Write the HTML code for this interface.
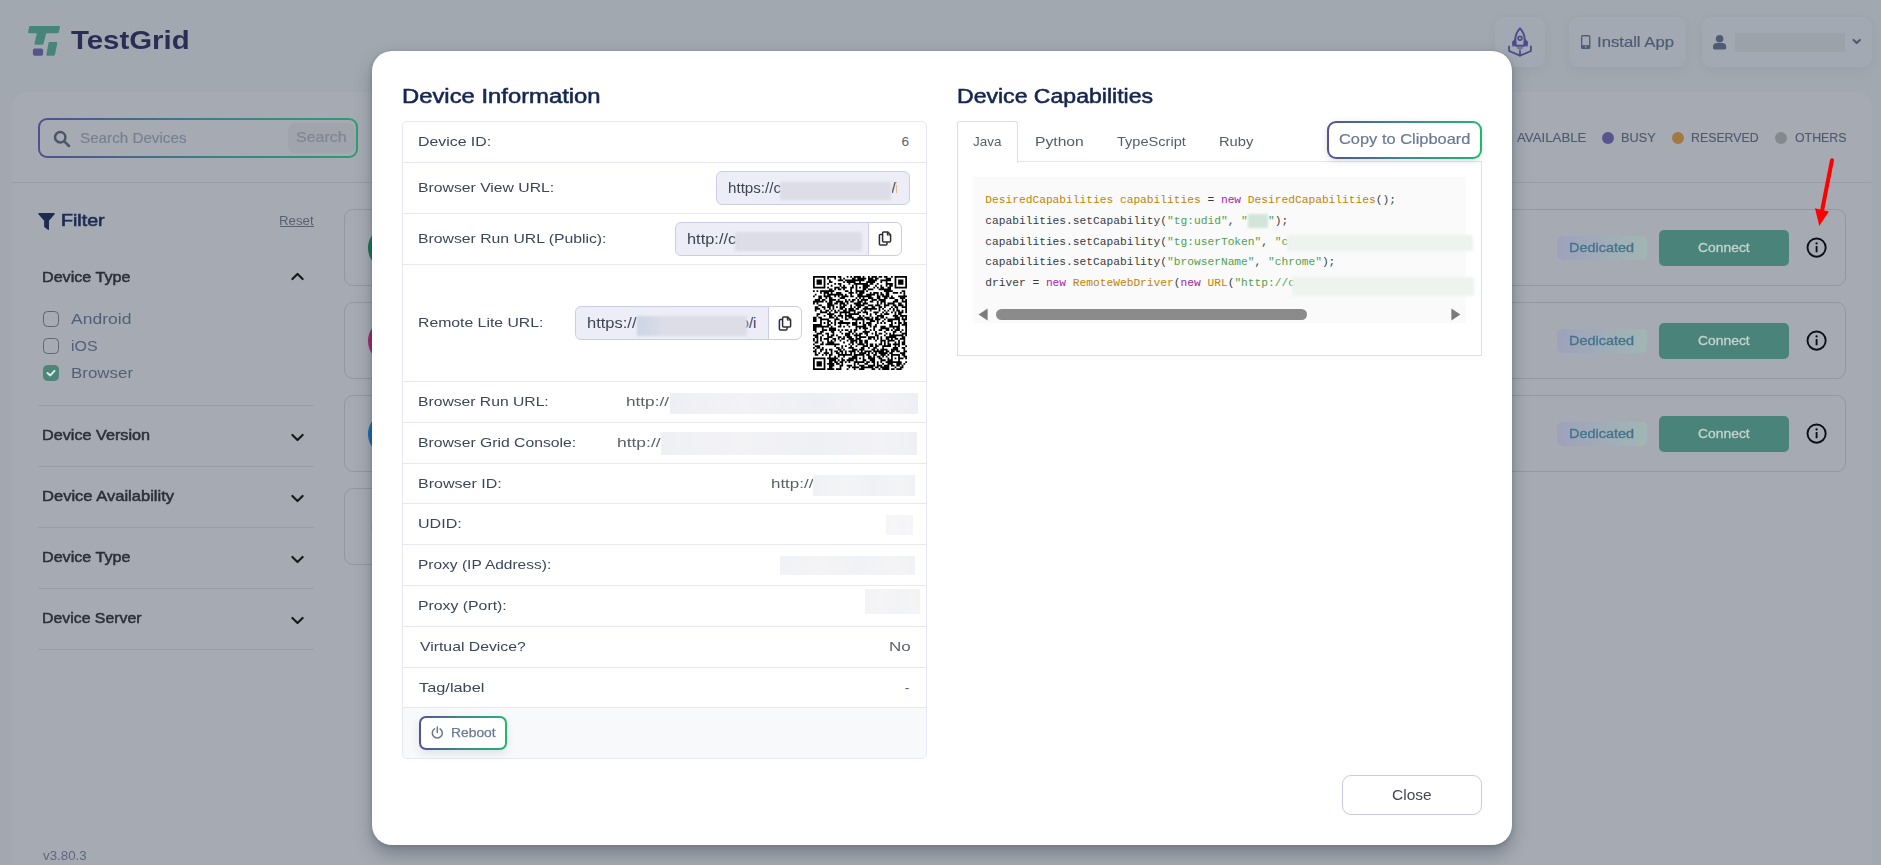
<!DOCTYPE html>
<html lang="en"><head><meta charset="utf-8"><title>TestGrid - Device Information</title>
<style>
html,body{margin:0;padding:0;}
body{width:1881px;height:865px;overflow:hidden;position:relative;background:#a1a8b0;font-family:"Liberation Sans",sans-serif;}
.t{position:absolute;line-height:1;white-space:pre;display:block;transform-origin:0 0;}
svg{position:absolute;display:block;overflow:visible;}
#panel{position:absolute;left:12px;top:92px;width:1860px;height:800px;border-radius:15px 15px 0 0;background:#a6abb3;}
.hbtn{position:absolute;top:17px;height:50px;border-radius:9px;background:#a3a9b2;box-shadow:0 3px 10px rgba(60,70,90,.07);}
.hr{position:absolute;height:1px;background:#979da6;}
.card{position:absolute;left:344px;width:1500px;height:75px;border:1px solid #92989f;border-radius:9px;}
.badge{position:absolute;left:1557px;width:90px;height:24px;border-radius:5px;background:linear-gradient(90deg,#9ea2bc,#a1b6b4);}
.conn{position:absolute;left:1659px;width:130px;height:36px;border-radius:5px;background:#4a8379;}
.cb{position:absolute;left:43px;width:14px;height:14px;border:1px solid #5f6670;border-radius:4.5px;}
#modal{position:absolute;left:372px;top:51px;width:1140px;height:794px;border-radius:20px;background:#fff;box-shadow:0 9px 17px rgba(35,52,64,.36),0 1px 4px rgba(35,52,64,.2);}
.rowl{position:absolute;left:403px;width:523px;height:1px;background:#e7e8f3;}
.inp{position:absolute;box-sizing:border-box;background:#ecedf6;border:1px solid #cdcce6;}
.blur{position:absolute;filter:blur(1.2px);}
.m{font-family:"Liberation Mono",monospace;font-size:11.22px;}

</style></head>
<body>
<svg style="left:28px;top:25px" width="33" height="31" viewBox="28 25 33 31">
<path d="M30.2 26 H59.2 Q60.3 26 60 27.2 L58.7 32.2 Q58.4 33.2 57.3 33.2 H46.2 L43.6 43.6 Q43.3 44.7 42.2 44.7 H35.4 Q34.2 44.7 34.5 43.5 L36.9 33.2 H29.2 Q27.9 33.2 28.2 32 L29.1 27 Q29.3 26 30.2 26 Z" fill="#47857a"/>
<path d="M49.6 42 H56.2 Q57.6 42 57.3 43.3 L55 54.6 Q54.8 55.7 53.6 55.7 H47.4 Q46.1 55.7 46.4 54.4 L48.5 43 Q48.7 42 49.6 42 Z" fill="#47857a"/>
<rect x="32.9" y="48.6" width="10.2" height="7.2" rx="1.8" fill="#555687"/>
</svg>
<span class="t" style="top:27.30px;font-size:26px;color:#2b2d55;left:70.87px;transform:scaleX(1.1304);font-weight:700;">TestGrid</span>
<div class="hbtn" style="left:1495px;width:50px"></div>
<div class="hbtn" style="left:1569px;width:117px"></div>
<div class="hbtn" style="left:1702px;width:170px"></div>
<svg style="left:1506.7px;top:27px" width="26" height="30" viewBox="0 0 26 30" fill="none" stroke="#4b4c8c" stroke-width="2" stroke-linecap="round" stroke-linejoin="round">
<path d="M13 1.4 C9.4 5 7.9 9.6 8.3 15 L8.7 18.8 H17.3 L17.7 15 C18.1 9.6 16.6 5 13 1.4 Z"/>
<circle cx="13" cy="11.2" r="1.9" stroke-width="1.7"/>
<path d="M8.1 12.2 L5.5 14.9 L5.9 19.3 L8.7 17.5 Z" fill="#4b4c8c" stroke-width="1"/>
<path d="M17.9 12.2 L20.5 14.9 L20.1 19.3 L17.3 17.5 Z" fill="#4b4c8c" stroke-width="1"/>
<path d="M2.1 19.4 V24 L13 28.7 L23.9 24 V19.4" stroke-width="1.8"/>
<path d="M13 24 V28.4" stroke-width="1.8"/>
<path d="M11.1 20.4 V21.4 M13 20.6 V22.4 M14.9 20.4 V21.4" stroke-width="1.1"/>
</svg>
<svg style="left:1580.8px;top:35px" width="9.4" height="13.9" viewBox="0 0 9.4 13.9">
<rect x="0" y="0" width="9.4" height="13.9" rx="1.5" fill="#4e5b74"/>
<rect x="1.3" y="1.4" width="6.8" height="8.8" fill="#a3a9b2"/>
<rect x="4" y="11.3" width="1.4" height="1.3" fill="#a3a9b2"/>
</svg>
<span class="t" style="top:35.20px;font-size:14.2px;color:#4e5b74;left:1597.16px;transform:scaleX(1.1758);-webkit-text-stroke:0.2px #4e5b74;">Install App</span>
<svg style="left:1713.3px;top:34.6px" width="13.2" height="14.4" viewBox="0 0 13.2 14.4" fill="#4e5b74">
<circle cx="6.6" cy="3.8" r="3.8"/>
<path d="M0 13 V11.4 C0 9.2 1.7 7.9 3.6 7.9 H9.6 C11.5 7.9 13.2 9.2 13.2 11.4 V13 Q13.2 14.4 11.8 14.4 H1.4 Q0 14.4 0 13 Z"/>
</svg>
<div style="position:absolute;left:1735px;top:33px;width:110px;height:19px;background:#9ba2aa;"></div>
<svg style="left:1851.6px;top:38px" width="9.4" height="7" viewBox="0 0 9.4 7" fill="none" stroke="#4e5b74" stroke-width="2.1" stroke-linecap="round" stroke-linejoin="round"><path d="M1.5 1.9 L4.7 5.1 L7.9 1.9"/></svg>
<div id="panel"></div>
<div class="hr" style="left:12px;top:182px;width:1859px"></div>
<div style="position:absolute;left:38px;top:118px;width:320px;height:40px;border-radius:9px;background:linear-gradient(90deg,#50508f 0%,#3f7f86 55%,#2f9b76 100%);"><div style="position:absolute;left:2px;top:2px;width:316px;height:36px;border-radius:7px;background:#a6abb3;"></div></div>
<div style="position:absolute;left:288px;top:123px;width:67px;height:30px;border-radius:7px;background:#a0a5ad;"></div>
<svg style="left:53px;top:130px" width="18" height="18" viewBox="0 0 18 18" fill="none" stroke="#4d5668" stroke-width="2.5" stroke-linecap="round"><circle cx="7.2" cy="7.2" r="5.2"/><path d="M11.3 11.3 L16 16"/></svg>
<span class="t" style="top:131.15px;font-size:14.3px;color:#78808f;left:79.61px;transform:scaleX(1.0639);-webkit-text-stroke:0.2px #78808f;">Search Devices</span>
<span class="t" style="top:130.05px;font-size:14.5px;color:#7f8693;left:295.88px;transform:scaleX(1.1005);-webkit-text-stroke:0.2px #7f8693;">Search</span>
<span class="t" style="top:131.30px;font-size:13px;color:#4f5a70;left:1516.97px;transform:scaleX(1.0180);-webkit-text-stroke:0.15px #4f5a70;">AVAILABLE</span>
<div style="position:absolute;left:1602px;top:132px;width:12px;height:12px;border-radius:50%;background:#56568c;"></div>
<span class="t" style="top:131.30px;font-size:13px;color:#4f5a70;left:1621.35px;transform:scaleX(0.9809);-webkit-text-stroke:0.15px #4f5a70;">BUSY</span>
<div style="position:absolute;left:1672px;top:132px;width:12px;height:12px;border-radius:50%;background:#9f7a45;"></div>
<span class="t" style="top:131.30px;font-size:13px;color:#4f5a70;left:1691.39px;transform:scaleX(0.9498);-webkit-text-stroke:0.15px #4f5a70;">RESERVED</span>
<div style="position:absolute;left:1775px;top:132px;width:12px;height:12px;border-radius:50%;background:#85888f;"></div>
<span class="t" style="top:131.30px;font-size:13px;color:#4f5a70;left:1794.82px;transform:scaleX(0.9498);-webkit-text-stroke:0.15px #4f5a70;">OTHERS</span>
<svg style="left:38px;top:213px" width="17" height="17" viewBox="0 0 16.4 16.4" fill="#1c2b52"><path d="M0.9 0 H15.5 Q16.6 0.2 16 1.2 L10.6 7.4 V15.6 Q10.5 16.7 9.6 16.1 L6.3 13.7 Q5.9 13.4 5.9 12.9 V7.4 L0.4 1.2 Q-0.2 0.2 0.9 0 Z"/></svg>
<span class="t" style="top:212.90px;font-size:15.8px;color:#1d2c52;left:61.39px;transform:scaleX(1.2428);-webkit-text-stroke:0.6px #1d2c52;">Filter</span>
<span class="t" style="top:215.15px;font-size:12.3px;color:#59616e;left:279.41px;transform:scaleX(1.0763);">Reset</span>
<div style="position:absolute;left:280.4px;top:226px;width:33.6px;height:1px;background:#59616e;"></div>
<span class="t" style="top:270.15px;font-size:14.3px;color:#2b3039;left:42.28px;transform:scaleX(1.1277);-webkit-text-stroke:0.5px #2b3039;">Device Type</span>
<svg style="left:291px;top:272.0px" width="13" height="9" viewBox="0 0 12.4 8.6" fill="none" stroke="#17191d" stroke-width="2.1" stroke-linecap="round" stroke-linejoin="round"><path d="M1.3 6.7 L6.2 1.9 L11.1 6.7"/></svg>
<div class="cb" style="top:311px"></div>
<div class="cb" style="top:338px"></div>
<div class="cb" style="top:365px;background:#4b8679;border-color:#4b8679"></div>
<svg style="left:46px;top:369px" width="10" height="9" viewBox="0 0 10 9" fill="none" stroke="#e2eae8" stroke-width="2" stroke-linecap="round" stroke-linejoin="round"><path d="M1.5 4 L4.3 6.4 L8.5 1.9"/></svg>
<span class="t" style="top:311.95px;font-size:14.7px;color:#535f76;left:71.37px;transform:scaleX(1.1934);">Android</span>
<span class="t" style="top:338.95px;font-size:14.7px;color:#535f76;left:70.53px;transform:scaleX(1.0855);">iOS</span>
<span class="t" style="top:365.95px;font-size:14.7px;color:#535f76;left:70.51px;transform:scaleX(1.1513);">Browser</span>
<div class="hr" style="left:38px;top:405px;width:276px"></div>
<div class="hr" style="left:38px;top:466px;width:276px"></div>
<div class="hr" style="left:38px;top:527px;width:276px"></div>
<div class="hr" style="left:38px;top:588px;width:276px"></div>
<div class="hr" style="left:38px;top:649px;width:276px"></div>
<span class="t" style="top:428.15px;font-size:14.3px;color:#2b3039;left:42.27px;transform:scaleX(1.1332);-webkit-text-stroke:0.5px #2b3039;">Device Version</span>
<svg style="left:291px;top:432.8px" width="13" height="9" viewBox="0 0 12.4 8.6" fill="none" stroke="#17191d" stroke-width="2.1" stroke-linecap="round" stroke-linejoin="round"><path d="M1.3 1.9 L6.2 6.7 L11.1 1.9"/></svg>
<span class="t" style="top:489.15px;font-size:14.3px;color:#2b3039;left:42.24px;transform:scaleX(1.1567);-webkit-text-stroke:0.5px #2b3039;">Device Availability</span>
<svg style="left:291px;top:493.8px" width="13" height="9" viewBox="0 0 12.4 8.6" fill="none" stroke="#17191d" stroke-width="2.1" stroke-linecap="round" stroke-linejoin="round"><path d="M1.3 1.9 L6.2 6.7 L11.1 1.9"/></svg>
<span class="t" style="top:550.15px;font-size:14.3px;color:#2b3039;left:42.28px;transform:scaleX(1.1277);-webkit-text-stroke:0.5px #2b3039;">Device Type</span>
<svg style="left:291px;top:554.8px" width="13" height="9" viewBox="0 0 12.4 8.6" fill="none" stroke="#17191d" stroke-width="2.1" stroke-linecap="round" stroke-linejoin="round"><path d="M1.3 1.9 L6.2 6.7 L11.1 1.9"/></svg>
<span class="t" style="top:611.15px;font-size:14.3px;color:#2b3039;left:42.30px;transform:scaleX(1.1087);-webkit-text-stroke:0.5px #2b3039;">Device Server</span>
<svg style="left:291px;top:615.8px" width="13" height="9" viewBox="0 0 12.4 8.6" fill="none" stroke="#17191d" stroke-width="2.1" stroke-linecap="round" stroke-linejoin="round"><path d="M1.3 1.9 L6.2 6.7 L11.1 1.9"/></svg>
<span class="t" style="top:850.15px;font-size:12.3px;color:#5b6780;left:43.05px;transform:scaleX(1.0814);">v3.80.3</span>
<div class="card" style="top:209px;width:1500px"></div>
<div style="position:absolute;left:368.3px;top:226px;width:44px;height:44px;border-radius:50%;background:#19744f;"></div>
<div class="badge" style="top:236px"></div>
<span class="t" style="top:242.15px;font-size:12.3px;color:#45748a;left:1569.41px;transform:scaleX(1.1757);-webkit-text-stroke:0.35px #45748a;">Dedicated</span>
<div class="conn" style="top:230px"></div>
<span class="t" style="top:242.15px;font-size:12.3px;color:#c3d3cf;left:1698.00px;transform:scaleX(1.1286);-webkit-text-stroke:0.3px #c3d3cf;">Connect</span>
<svg style="left:1805.6px;top:236.9px" width="21" height="21" viewBox="0 0 21 21"><circle cx="10.6" cy="10.6" r="9.1" fill="none" stroke="#0d0f16" stroke-width="1.9"/><circle cx="10.6" cy="6.4" r="1.15" fill="#0d0f16"/><rect x="9.65" y="8.9" width="1.9" height="6.4" rx="0.4" fill="#0d0f16"/></svg>
<div class="card" style="top:302px;width:1500px"></div>
<div style="position:absolute;left:368.3px;top:319px;width:44px;height:44px;border-radius:50%;background:#a0296f;"></div>
<div class="badge" style="top:329px"></div>
<span class="t" style="top:335.15px;font-size:12.3px;color:#45748a;left:1569.41px;transform:scaleX(1.1757);-webkit-text-stroke:0.35px #45748a;">Dedicated</span>
<div class="conn" style="top:323px"></div>
<span class="t" style="top:335.15px;font-size:12.3px;color:#c3d3cf;left:1698.00px;transform:scaleX(1.1286);-webkit-text-stroke:0.3px #c3d3cf;">Connect</span>
<svg style="left:1805.6px;top:329.9px" width="21" height="21" viewBox="0 0 21 21"><circle cx="10.6" cy="10.6" r="9.1" fill="none" stroke="#0d0f16" stroke-width="1.9"/><circle cx="10.6" cy="6.4" r="1.15" fill="#0d0f16"/><rect x="9.65" y="8.9" width="1.9" height="6.4" rx="0.4" fill="#0d0f16"/></svg>
<div class="card" style="top:395px;width:1500px"></div>
<div style="position:absolute;left:368.3px;top:412px;width:44px;height:44px;border-radius:50%;background:#1668b2;"></div>
<div class="badge" style="top:422px"></div>
<span class="t" style="top:428.15px;font-size:12.3px;color:#45748a;left:1569.41px;transform:scaleX(1.1757);-webkit-text-stroke:0.35px #45748a;">Dedicated</span>
<div class="conn" style="top:416px"></div>
<span class="t" style="top:428.15px;font-size:12.3px;color:#c3d3cf;left:1698.00px;transform:scaleX(1.1286);-webkit-text-stroke:0.3px #c3d3cf;">Connect</span>
<svg style="left:1805.6px;top:422.9px" width="21" height="21" viewBox="0 0 21 21"><circle cx="10.6" cy="10.6" r="9.1" fill="none" stroke="#0d0f16" stroke-width="1.9"/><circle cx="10.6" cy="6.4" r="1.15" fill="#0d0f16"/><rect x="9.65" y="8.9" width="1.9" height="6.4" rx="0.4" fill="#0d0f16"/></svg>
<div class="card" style="top:488px;width:900px"></div>
<div style="position:absolute;left:371px;top:505px;width:44px;height:44px;border-radius:50%;background:#999ea7;"></div>
<svg style="left:1800px;top:150px" width="50" height="90" viewBox="1800 150 50 90">
<path d="M1832 160.2 L1822.4 209" stroke="#ff0000" stroke-width="4" stroke-linecap="round" fill="none"/>
<path d="M1815 208.2 L1828.9 211.4 L1819.3 225.9 Z" fill="#ff0000"/>
</svg>
<div id="modal"></div>
<span class="t" style="top:86.30px;font-size:20.0px;color:#15274f;left:401.95px;transform:scaleX(1.1911);-webkit-text-stroke:0.55px #15274f;">Device Information</span>
<span class="t" style="top:86.30px;font-size:20.0px;color:#15274f;left:957.01px;transform:scaleX(1.1525);-webkit-text-stroke:0.55px #15274f;">Device Capabilities</span>
<div style="position:absolute;left:402px;top:121px;width:523px;height:636px;border:1px solid #e7e8f3;border-radius:5px;"></div>
<div style="position:absolute;left:403px;top:708px;width:523px;height:50px;background:#f8f9fb;border-radius:0 0 4px 4px;"></div>
<div class="rowl" style="top:162px"></div>
<div class="rowl" style="top:213px"></div>
<div class="rowl" style="top:264px"></div>
<div class="rowl" style="top:381px"></div>
<div class="rowl" style="top:422px"></div>
<div class="rowl" style="top:463px"></div>
<div class="rowl" style="top:503px"></div>
<div class="rowl" style="top:544px"></div>
<div class="rowl" style="top:585px"></div>
<div class="rowl" style="top:626px"></div>
<div class="rowl" style="top:667px"></div>
<div class="rowl" style="top:707px"></div>
<span class="t" style="top:134.98px;font-size:13.65px;color:#3c4659;left:418.30px;transform:scaleX(1.1619);">Device ID:</span>
<span class="t" style="top:180.98px;font-size:13.65px;color:#3c4659;left:418.31px;transform:scaleX(1.1545);">Browser View URL:</span>
<span class="t" style="top:231.98px;font-size:13.65px;color:#3c4659;left:418.31px;transform:scaleX(1.1548);">Browser Run URL (Public):</span>
<span class="t" style="top:315.98px;font-size:13.65px;color:#3c4659;left:418.31px;transform:scaleX(1.1562);">Remote Lite URL:</span>
<span class="t" style="top:394.98px;font-size:13.65px;color:#3c4659;left:418.31px;transform:scaleX(1.1497);">Browser Run URL:</span>
<span class="t" style="top:435.98px;font-size:13.65px;color:#3c4659;left:418.31px;transform:scaleX(1.1524);">Browser Grid Console:</span>
<span class="t" style="top:476.98px;font-size:13.65px;color:#3c4659;left:418.28px;transform:scaleX(1.1751);">Browser ID:</span>
<span class="t" style="top:516.97px;font-size:13.65px;color:#3c4659;left:418.36px;transform:scaleX(1.1791);">UDID:</span>
<span class="t" style="top:557.97px;font-size:13.65px;color:#3c4659;left:418.33px;transform:scaleX(1.1360);">Proxy (IP Address):</span>
<span class="t" style="top:598.97px;font-size:13.65px;color:#3c4659;left:418.30px;transform:scaleX(1.1585);">Proxy (Port):</span>
<span class="t" style="top:639.97px;font-size:13.65px;color:#3c4659;left:419.53px;transform:scaleX(1.1562);">Virtual Device?</span>
<span class="t" style="top:680.97px;font-size:13.65px;color:#3c4659;left:419.23px;transform:scaleX(1.1980);">Tag/label</span>
<span class="t" style="top:134.98px;font-size:13.65px;color:#5b6069;left:901.51px;">6</span>
<span class="t" style="top:639.97px;font-size:13.65px;color:#5b6069;left:888.81px;transform:scaleX(1.2440);">No</span>
<span class="t" style="top:680.97px;font-size:13.65px;color:#5b6069;left:904.79px;">-</span>
<div class="inp" style="left:716px;top:171px;width:194px;height:34px;border-radius:6px"></div>
<span class="t" style="top:180.30px;font-size:15px;color:#3e4656;left:728.35px;transform:scaleX(1.0101);">https://c</span>
<div class="blur" style="left:780px;top:182px;width:111px;height:18px;background:#dcdde7"></div>
<span class="t" style="top:180.30px;font-size:15px;color:#3e4656;left:891.60px;width:5.6px;overflow:hidden;">/i</span>
<div class="inp" style="left:675px;top:222px;width:194px;height:34px;border-radius:6px 0 0 6px"></div>
<div style="position:absolute;left:868px;top:222px;width:34px;height:34px;box-sizing:border-box;border:1px solid #cdcce6;border-radius:0 6px 6px 0;background:#fff;"></div>
<span class="t" style="top:231.30px;font-size:15px;color:#3e4656;left:687.26px;transform:scaleX(1.0921);">http://c</span>
<div class="blur" style="left:735px;top:232px;width:127px;height:19px;background:#dcdde7"></div>
<div class="inp" style="left:575px;top:306px;width:194px;height:34px;border-radius:6px 0 0 6px"></div>
<div style="position:absolute;left:768px;top:306px;width:34px;height:34px;box-sizing:border-box;border:1px solid #cdcce6;border-radius:0 6px 6px 0;background:#fff;"></div>
<span class="t" style="top:315.30px;font-size:15px;color:#3e4656;left:587.26px;transform:scaleX(1.1005);">https://</span>
<span class="t" style="top:315.30px;font-size:15px;color:#3e4656;left:740.57px;width:15.4px;overflow:hidden;">o/i</span>
<div class="blur" style="left:637px;top:316px;width:110px;height:20px;background:linear-gradient(90deg,#ccd5e6 0%,#dcdde7 25%)"></div>
<svg style="left:878px;top:231px" width="14" height="15" viewBox="0 0 14 15" fill="none" stroke="#2f2f38" stroke-width="1.5" stroke-linejoin="round"><path d="M4.6 3.2 V1.9 Q4.6 0.9 5.6 0.9 H9.6 L12.6 3.9 V10 Q12.6 11 11.6 11 H5.6 Q4.6 11 4.6 10 Z" fill="#fff"/><path d="M4.4 3.6 H2.4 Q1.4 3.6 1.4 4.6 V13 Q1.4 14 2.4 14 H8 Q9 14 9 13 V11.2"/><path d="M9.4 1 V4 H12.4" stroke-width="1.2"/></svg>
<svg style="left:778px;top:315.6px" width="14" height="15" viewBox="0 0 14 15" fill="none" stroke="#2f2f38" stroke-width="1.5" stroke-linejoin="round"><path d="M4.6 3.2 V1.9 Q4.6 0.9 5.6 0.9 H9.6 L12.6 3.9 V10 Q12.6 11 11.6 11 H5.6 Q4.6 11 4.6 10 Z" fill="#fff"/><path d="M4.4 3.6 H2.4 Q1.4 3.6 1.4 4.6 V13 Q1.4 14 2.4 14 H8 Q9 14 9 13 V11.2"/><path d="M9.4 1 V4 H12.4" stroke-width="1.2"/></svg>
<span class="t" style="top:394.98px;font-size:13.65px;color:#5b6069;left:625.61px;transform:scaleX(1.2591);">http://</span>
<span class="t" style="top:435.98px;font-size:13.65px;color:#5b6069;left:617.39px;transform:scaleX(1.2772);">http://</span>
<span class="t" style="top:476.98px;font-size:13.65px;color:#5b6069;left:771.03px;transform:scaleX(1.2410);">http://</span>
<div class="blur" style="left:669.8px;top:393px;width:248px;height:21px;filter:blur(.5px);background:linear-gradient(90deg,#eeeff4 0%,#f3f3f6 30%,#eeeff4 60%,#f3f3f6 85%,#eeeff4 100%)"></div>
<div class="blur" style="left:661px;top:432px;width:256px;height:23px;filter:blur(.5px);background:linear-gradient(90deg,#eff0f4 0%,#f3f3f6 30%,#eff0f4 60%,#f3f3f6 85%,#eff0f4 100%)"></div>
<div class="blur" style="left:813.2px;top:475px;width:102px;height:21px;filter:blur(.5px);background:linear-gradient(90deg,#f0f1f4 0%,#f3f4f6 30%,#f0f1f4 60%,#f3f4f6 85%,#f0f1f4 100%)"></div>
<div class="blur" style="left:886px;top:515px;width:27px;height:20px;filter:blur(.5px);background:linear-gradient(90deg,#f5f5f7 0%,#f7f7f9 30%,#f5f5f7 60%,#f7f7f9 85%,#f5f5f7 100%)"></div>
<div class="blur" style="left:780px;top:555.6px;width:135px;height:19px;filter:blur(.5px);background:linear-gradient(90deg,#f1f2f5 0%,#f4f4f6 30%,#f1f2f5 60%,#f4f4f6 85%,#f1f2f5 100%)"></div>
<div class="blur" style="left:865px;top:589px;width:55px;height:24.5px;filter:blur(.5px);background:linear-gradient(90deg,#f2f3f5 0%,#f5f5f7 30%,#f2f3f5 60%,#f5f5f7 85%,#f2f3f5 100%)"></div>
<div style="position:absolute;left:419px;top:716px;width:88px;height:34px;border-radius:7px;background:linear-gradient(90deg,#55509a 0%,#3f8a8a 50%,#22b573 100%);box-shadow:0 4px 8px rgba(60,70,90,.12);"><div style="position:absolute;left:2px;top:2px;width:84px;height:30px;border-radius:5px;background:#fff;"></div></div>
<svg style="left:431px;top:726px" width="13" height="13" viewBox="0 0 13 13" fill="none" stroke="#6c7889" stroke-width="1.5" stroke-linecap="round"><path d="M6.3 0.9 V6.6"/><path d="M3.5 2.8 A5 5 0 1 0 9.1 2.8"/></svg>
<span class="t" style="top:727.15px;font-size:12.3px;color:#6c7b93;left:450.66px;transform:scaleX(1.1254);-webkit-text-stroke:0.25px #6c7b93;">Reboot</span>
<div style="position:absolute;left:1342px;top:775px;width:140px;height:40px;box-sizing:border-box;border:1px solid #c9c9e6;border-radius:9px;background:#fff;"></div>
<span class="t" style="top:787.95px;font-size:14.7px;color:#45474d;left:1392.21px;transform:scaleX(1.0557);">Close</span>
<div style="position:absolute;left:957px;top:161px;width:525px;height:1px;background:#dfe5ee;"></div>
<div style="position:absolute;left:957px;top:161px;width:523px;height:194px;border:1px solid #dcdfe3;border-top:none;"></div>
<div style="position:absolute;left:957px;top:121px;width:59px;height:40px;border:1px solid #dcdfe3;border-bottom:1px solid #fff;border-radius:3px 3px 0 0;background:#fff;"></div>
<span class="t" style="top:135.00px;font-size:13.6px;color:#575d68;left:972.79px;transform:scaleX(0.9890);">Java</span>
<span class="t" style="top:135.00px;font-size:13.6px;color:#575d68;left:1034.91px;transform:scaleX(1.1526);">Python</span>
<span class="t" style="top:135.00px;font-size:13.6px;color:#575d68;left:1116.67px;transform:scaleX(1.0714);">TypeScript</span>
<span class="t" style="top:135.00px;font-size:13.6px;color:#575d68;left:1219.39px;transform:scaleX(1.0815);">Ruby</span>
<div style="position:absolute;left:1327px;top:121px;width:155px;height:38px;border-radius:9px;background:linear-gradient(90deg,#55509a 0%,#3f8a8a 50%,#22b573 100%);box-shadow:0 2px 6px rgba(80,90,110,.2);"><div style="position:absolute;left:2px;top:2px;width:151px;height:34px;border-radius:7px;background:#fff;"></div></div>
<span class="t" style="top:132.00px;font-size:14.6px;color:#6a7a91;left:1338.87px;transform:scaleX(1.1252);-webkit-text-stroke:0.2px #6a7a91;">Copy to Clipboard</span>
<div style="position:absolute;left:973px;top:177px;width:493px;height:146px;background:#fafafa;"></div>
<span class="t m" style="left:985.30px;top:194.69px;letter-spacing:-0.0011px;color:#c18401">DesiredCapabilities capabilities</span><span class="t m" style="left:1200.72px;top:194.69px;letter-spacing:-0.0011px;color:#383a42"> = </span><span class="t m" style="left:1220.92px;top:194.69px;letter-spacing:-0.0011px;color:#a626a4">new</span><span class="t m" style="left:1241.12px;top:194.69px;letter-spacing:-0.0011px;color:#c18401"> DesiredCapabilities</span><span class="t m" style="left:1375.76px;top:194.69px;letter-spacing:-0.0011px;color:#383a42">();</span>
<span class="t m" style="left:985.30px;top:215.69px;letter-spacing:-0.0011px;color:#383a42">capabilities.setCapability(</span><span class="t m" style="left:1167.06px;top:215.69px;letter-spacing:-0.0011px;color:#50a14f">"tg:udid"</span><span class="t m" style="left:1227.65px;top:215.69px;letter-spacing:-0.0011px;color:#383a42">, </span><span class="t m" style="left:1241.12px;top:215.69px;letter-spacing:-0.0011px;color:#50a14f">"</span><span class="t m" style="left:1247.85px;top:215.69px;letter-spacing:-0.0011px;color:#383a42">   </span><span class="t m" style="left:1268.04px;top:215.69px;letter-spacing:-0.0011px;color:#50a14f">"</span><span class="t m" style="left:1274.78px;top:215.69px;letter-spacing:-0.0011px;color:#383a42">);</span>
<span class="t m" style="left:985.30px;top:236.69px;letter-spacing:-0.0011px;color:#383a42">capabilities.setCapability(</span><span class="t m" style="left:1167.06px;top:236.69px;letter-spacing:-0.0011px;color:#50a14f">"tg:userToken"</span><span class="t m" style="left:1261.31px;top:236.69px;letter-spacing:-0.0011px;color:#383a42">, </span><span class="t m" style="left:1274.78px;top:236.69px;letter-spacing:-0.0011px;color:#50a14f">"c</span>
<span class="t m" style="left:985.30px;top:256.69px;letter-spacing:-0.0011px;color:#383a42">capabilities.setCapability(</span><span class="t m" style="left:1167.06px;top:256.69px;letter-spacing:-0.0011px;color:#50a14f">"browserName"</span><span class="t m" style="left:1254.58px;top:256.69px;letter-spacing:-0.0011px;color:#383a42">, </span><span class="t m" style="left:1268.04px;top:256.69px;letter-spacing:-0.0011px;color:#50a14f">"chrome"</span><span class="t m" style="left:1321.90px;top:256.69px;letter-spacing:-0.0011px;color:#383a42">);</span>
<span class="t m" style="left:985.30px;top:277.69px;letter-spacing:-0.0011px;color:#383a42">driver = </span><span class="t m" style="left:1045.89px;top:277.69px;letter-spacing:-0.0011px;color:#a626a4">new</span><span class="t m" style="left:1066.08px;top:277.69px;letter-spacing:-0.0011px;color:#c18401"> RemoteWebDriver</span><span class="t m" style="left:1173.80px;top:277.69px;letter-spacing:-0.0011px;color:#383a42">(</span><span class="t m" style="left:1180.53px;top:277.69px;letter-spacing:-0.0011px;color:#a626a4">new</span><span class="t m" style="left:1200.72px;top:277.69px;letter-spacing:-0.0011px;color:#c18401"> URL</span><span class="t m" style="left:1227.65px;top:277.69px;letter-spacing:-0.0011px;color:#383a42">(</span><span class="t m" style="left:1234.38px;top:277.69px;letter-spacing:-0.0011px;color:#50a14f">"http://c</span>
<div class="blur" style="left:1248px;top:214px;width:20px;height:14px;background:#d3e5d8;filter:blur(.8px)"></div>
<div class="blur" style="left:1287px;top:235px;width:186px;height:16px;background:#edf3ef;filter:blur(1.5px)"></div>
<div class="blur" style="left:1292px;top:277px;width:182px;height:19px;background:#edf3ef;filter:blur(1.5px)"></div>
<div style="position:absolute;left:995.5px;top:309px;width:311px;height:11px;border-radius:6px;background:#8b8b8b;"></div>
<svg style="left:978px;top:308px" width="10" height="13" viewBox="0 0 10 13"><path d="M9.6 0.6 V12.4 L0.6 6.5 Z" fill="#7b7b7b"/></svg>
<svg style="left:1451px;top:308px" width="10" height="13" viewBox="0 0 10 13"><path d="M0.4 0.6 V12.4 L9.4 6.5 Z" fill="#7b7b7b"/></svg>
<svg style="left:813px;top:276px" width="94" height="94" viewBox="0 0 53 53" shape-rendering="auto"><path d="M0 0h7v1h-7zM8 0h5v1h-5zM14 0h2v1h-2zM19 0h1v1h-1zM21 0h1v1h-1zM23 0h4v1h-4zM28 0h1v1h-1zM31 0h1v1h-1zM33 0h3v1h-3zM37 0h2v1h-2zM40 0h2v1h-2zM44 0h1v1h-1zM46 0h7v1h-7zM0 1h1v1h-1zM6 1h1v1h-1zM8 1h1v1h-1zM12 1h1v1h-1zM15 1h1v1h-1zM17 1h1v1h-1zM22 1h2v1h-2zM25 1h5v1h-5zM31 1h3v1h-3zM35 1h2v1h-2zM41 1h3v1h-3zM46 1h1v1h-1zM52 1h1v1h-1zM0 2h1v1h-1zM2 2h3v1h-3zM6 2h1v1h-1zM9 2h1v1h-1zM14 2h3v1h-3zM18 2h11v1h-11zM31 2h5v1h-5zM38 2h6v1h-6zM46 2h1v1h-1zM48 2h3v1h-3zM52 2h1v1h-1zM0 3h1v1h-1zM2 3h3v1h-3zM6 3h1v1h-1zM9 3h2v1h-2zM17 3h1v1h-1zM19 3h5v1h-5zM26 3h1v1h-1zM30 3h5v1h-5zM38 3h1v1h-1zM41 3h1v1h-1zM46 3h1v1h-1zM48 3h3v1h-3zM52 3h1v1h-1zM0 4h1v1h-1zM2 4h3v1h-3zM6 4h1v1h-1zM8 4h1v1h-1zM12 4h1v1h-1zM14 4h2v1h-2zM20 4h1v1h-1zM23 4h8v1h-8zM32 4h2v1h-2zM36 4h1v1h-1zM41 4h4v1h-4zM46 4h1v1h-1zM48 4h3v1h-3zM52 4h1v1h-1zM0 5h1v1h-1zM6 5h1v1h-1zM10 5h1v1h-1zM15 5h1v1h-1zM17 5h1v1h-1zM22 5h1v1h-1zM24 5h1v1h-1zM28 5h4v1h-4zM35 5h1v1h-1zM38 5h1v1h-1zM41 5h1v1h-1zM43 5h2v1h-2zM46 5h1v1h-1zM52 5h1v1h-1zM0 6h7v1h-7zM8 6h1v1h-1zM12 6h3v1h-3zM16 6h3v1h-3zM21 6h2v1h-2zM24 6h1v1h-1zM26 6h1v1h-1zM28 6h3v1h-3zM34 6h1v1h-1zM36 6h1v1h-1zM38 6h2v1h-2zM42 6h2v1h-2zM46 6h7v1h-7zM9 7h2v1h-2zM12 7h1v1h-1zM14 7h2v1h-2zM17 7h1v1h-1zM21 7h1v1h-1zM24 7h1v1h-1zM28 7h2v1h-2zM31 7h3v1h-3zM37 7h7v1h-7zM0 8h1v1h-1zM2 8h1v1h-1zM4 8h8v1h-8zM18 8h2v1h-2zM21 8h1v1h-1zM24 8h5v1h-5zM30 8h1v1h-1zM40 8h5v1h-5zM50 8h2v1h-2zM4 9h1v1h-1zM6 9h3v1h-3zM10 9h1v1h-1zM13 9h3v1h-3zM20 9h3v1h-3zM24 9h1v1h-1zM26 9h3v1h-3zM32 9h1v1h-1zM34 9h3v1h-3zM38 9h1v1h-1zM41 9h2v1h-2zM45 9h3v1h-3zM49 9h1v1h-1zM51 9h1v1h-1zM1 10h1v1h-1zM6 10h1v1h-1zM8 10h9v1h-9zM18 10h1v1h-1zM21 10h1v1h-1zM25 10h3v1h-3zM30 10h5v1h-5zM36 10h1v1h-1zM38 10h2v1h-2zM41 10h2v1h-2zM51 10h1v1h-1zM0 11h1v1h-1zM3 11h2v1h-2zM6 11h4v1h-4zM12 11h1v1h-1zM14 11h1v1h-1zM16 11h4v1h-4zM21 11h2v1h-2zM25 11h8v1h-8zM36 11h2v1h-2zM39 11h4v1h-4zM44 11h1v1h-1zM48 11h5v1h-5zM3 12h2v1h-2zM7 12h1v1h-1zM9 12h2v1h-2zM15 12h3v1h-3zM24 12h1v1h-1zM26 12h1v1h-1zM28 12h1v1h-1zM31 12h3v1h-3zM36 12h2v1h-2zM40 12h2v1h-2zM43 12h3v1h-3zM49 12h3v1h-3zM1 13h3v1h-3zM5 13h2v1h-2zM9 13h4v1h-4zM14 13h1v1h-1zM18 13h1v1h-1zM20 13h1v1h-1zM22 13h2v1h-2zM25 13h1v1h-1zM27 13h4v1h-4zM33 13h3v1h-3zM37 13h4v1h-4zM46 13h2v1h-2zM50 13h1v1h-1zM52 13h1v1h-1zM0 14h6v1h-6zM7 14h1v1h-1zM9 14h2v1h-2zM13 14h4v1h-4zM18 14h2v1h-2zM21 14h2v1h-2zM25 14h3v1h-3zM29 14h1v1h-1zM32 14h2v1h-2zM36 14h1v1h-1zM38 14h3v1h-3zM45 14h3v1h-3zM50 14h3v1h-3zM0 15h1v1h-1zM2 15h1v1h-1zM8 15h3v1h-3zM12 15h2v1h-2zM15 15h3v1h-3zM19 15h1v1h-1zM23 15h4v1h-4zM28 15h3v1h-3zM36 15h1v1h-1zM38 15h1v1h-1zM40 15h1v1h-1zM42 15h4v1h-4zM48 15h2v1h-2zM52 15h1v1h-1zM3 16h2v1h-2zM8 16h4v1h-4zM15 16h1v1h-1zM17 16h2v1h-2zM21 16h1v1h-1zM24 16h5v1h-5zM31 16h3v1h-3zM35 16h3v1h-3zM40 16h3v1h-3zM45 16h2v1h-2zM48 16h3v1h-3zM52 16h1v1h-1zM1 17h2v1h-2zM5 17h2v1h-2zM8 17h2v1h-2zM11 17h1v1h-1zM13 17h1v1h-1zM15 17h3v1h-3zM21 17h1v1h-1zM23 17h1v1h-1zM25 17h2v1h-2zM29 17h2v1h-2zM33 17h2v1h-2zM37 17h2v1h-2zM40 17h1v1h-1zM44 17h1v1h-1zM46 17h2v1h-2zM50 17h3v1h-3zM1 18h3v1h-3zM6 18h1v1h-1zM9 18h1v1h-1zM11 18h1v1h-1zM15 18h2v1h-2zM18 18h1v1h-1zM20 18h3v1h-3zM24 18h2v1h-2zM28 18h8v1h-8zM37 18h1v1h-1zM39 18h1v1h-1zM43 18h1v1h-1zM45 18h1v1h-1zM47 18h1v1h-1zM52 18h1v1h-1zM1 19h1v1h-1zM4 19h1v1h-1zM7 19h2v1h-2zM10 19h1v1h-1zM12 19h1v1h-1zM14 19h1v1h-1zM17 19h2v1h-2zM20 19h4v1h-4zM27 19h1v1h-1zM29 19h1v1h-1zM32 19h1v1h-1zM37 19h1v1h-1zM40 19h1v1h-1zM42 19h1v1h-1zM45 19h1v1h-1zM47 19h2v1h-2zM50 19h1v1h-1zM52 19h1v1h-1zM4 20h4v1h-4zM9 20h1v1h-1zM12 20h2v1h-2zM15 20h6v1h-6zM23 20h1v1h-1zM25 20h2v1h-2zM28 20h3v1h-3zM34 20h3v1h-3zM39 20h1v1h-1zM41 20h1v1h-1zM44 20h1v1h-1zM46 20h1v1h-1zM48 20h3v1h-3zM52 20h1v1h-1zM2 21h2v1h-2zM8 21h4v1h-4zM15 21h1v1h-1zM18 21h1v1h-1zM20 21h6v1h-6zM30 21h1v1h-1zM32 21h1v1h-1zM35 21h1v1h-1zM38 21h1v1h-1zM40 21h3v1h-3zM46 21h1v1h-1zM48 21h2v1h-2zM2 22h1v1h-1zM6 22h1v1h-1zM9 22h2v1h-2zM12 22h1v1h-1zM14 22h3v1h-3zM18 22h4v1h-4zM26 22h1v1h-1zM28 22h1v1h-1zM32 22h1v1h-1zM36 22h4v1h-4zM45 22h3v1h-3zM49 22h4v1h-4zM0 23h2v1h-2zM3 23h2v1h-2zM9 23h3v1h-3zM13 23h1v1h-1zM16 23h1v1h-1zM18 23h1v1h-1zM20 23h3v1h-3zM25 23h3v1h-3zM29 23h3v1h-3zM33 23h1v1h-1zM35 23h2v1h-2zM38 23h2v1h-2zM41 23h1v1h-1zM46 23h3v1h-3zM50 23h1v1h-1zM52 23h1v1h-1zM0 24h2v1h-2zM4 24h5v1h-5zM12 24h3v1h-3zM18 24h2v1h-2zM22 24h7v1h-7zM30 24h4v1h-4zM35 24h3v1h-3zM40 24h1v1h-1zM42 24h7v1h-7zM50 24h3v1h-3zM0 25h2v1h-2zM4 25h1v1h-1zM8 25h2v1h-2zM12 25h1v1h-1zM15 25h2v1h-2zM24 25h1v1h-1zM28 25h1v1h-1zM32 25h3v1h-3zM36 25h1v1h-1zM39 25h1v1h-1zM42 25h3v1h-3zM48 25h1v1h-1zM51 25h1v1h-1zM4 26h1v1h-1zM6 26h1v1h-1zM8 26h1v1h-1zM10 26h1v1h-1zM12 26h1v1h-1zM14 26h7v1h-7zM22 26h3v1h-3zM26 26h1v1h-1zM28 26h1v1h-1zM30 26h3v1h-3zM36 26h1v1h-1zM38 26h1v1h-1zM40 26h1v1h-1zM44 26h1v1h-1zM46 26h1v1h-1zM48 26h2v1h-2zM51 26h2v1h-2zM0 27h5v1h-5zM8 27h2v1h-2zM12 27h1v1h-1zM15 27h1v1h-1zM19 27h1v1h-1zM22 27h3v1h-3zM28 27h2v1h-2zM31 27h2v1h-2zM35 27h1v1h-1zM43 27h2v1h-2zM48 27h1v1h-1zM50 27h3v1h-3zM0 28h9v1h-9zM10 28h1v1h-1zM14 28h2v1h-2zM17 28h1v1h-1zM20 28h1v1h-1zM24 28h6v1h-6zM32 28h1v1h-1zM34 28h2v1h-2zM38 28h3v1h-3zM43 28h6v1h-6zM52 28h1v1h-1zM0 29h2v1h-2zM5 29h1v1h-1zM9 29h4v1h-4zM24 29h1v1h-1zM26 29h1v1h-1zM28 29h3v1h-3zM34 29h1v1h-1zM38 29h5v1h-5zM45 29h1v1h-1zM47 29h2v1h-2zM52 29h1v1h-1zM0 30h2v1h-2zM5 30h3v1h-3zM9 30h4v1h-4zM14 30h1v1h-1zM16 30h1v1h-1zM18 30h2v1h-2zM21 30h1v1h-1zM23 30h2v1h-2zM29 30h1v1h-1zM32 30h1v1h-1zM34 30h1v1h-1zM37 30h2v1h-2zM41 30h2v1h-2zM44 30h1v1h-1zM46 30h3v1h-3zM50 30h1v1h-1zM52 30h1v1h-1zM1 31h1v1h-1zM4 31h2v1h-2zM10 31h2v1h-2zM15 31h1v1h-1zM20 31h2v1h-2zM23 31h1v1h-1zM28 31h4v1h-4zM35 31h1v1h-1zM40 31h1v1h-1zM45 31h2v1h-2zM49 31h1v1h-1zM52 31h1v1h-1zM2 32h3v1h-3zM7 32h2v1h-2zM11 32h1v1h-1zM16 32h1v1h-1zM18 32h3v1h-3zM22 32h1v1h-1zM24 32h1v1h-1zM26 32h2v1h-2zM29 32h2v1h-2zM33 32h1v1h-1zM35 32h1v1h-1zM37 32h2v1h-2zM41 32h1v1h-1zM43 32h1v1h-1zM45 32h1v1h-1zM50 32h3v1h-3zM0 33h3v1h-3zM5 33h1v1h-1zM8 33h1v1h-1zM10 33h2v1h-2zM13 33h1v1h-1zM18 33h3v1h-3zM23 33h4v1h-4zM30 33h1v1h-1zM35 33h2v1h-2zM40 33h1v1h-1zM43 33h8v1h-8zM52 33h1v1h-1zM1 34h2v1h-2zM4 34h1v1h-1zM8 34h3v1h-3zM14 34h2v1h-2zM17 34h1v1h-1zM19 34h3v1h-3zM24 34h1v1h-1zM26 34h4v1h-4zM31 34h4v1h-4zM36 34h1v1h-1zM38 34h1v1h-1zM41 34h6v1h-6zM50 34h2v1h-2zM0 35h1v1h-1zM2 35h1v1h-1zM4 35h1v1h-1zM6 35h3v1h-3zM11 35h2v1h-2zM14 35h1v1h-1zM16 35h2v1h-2zM20 35h3v1h-3zM24 35h3v1h-3zM31 35h2v1h-2zM34 35h1v1h-1zM36 35h1v1h-1zM38 35h1v1h-1zM41 35h2v1h-2zM44 35h1v1h-1zM46 35h2v1h-2zM49 35h3v1h-3zM0 36h1v1h-1zM2 36h1v1h-1zM4 36h1v1h-1zM8 36h1v1h-1zM10 36h1v1h-1zM12 36h1v1h-1zM15 36h1v1h-1zM19 36h1v1h-1zM21 36h4v1h-4zM26 36h2v1h-2zM29 36h2v1h-2zM35 36h1v1h-1zM38 36h3v1h-3zM42 36h4v1h-4zM48 36h1v1h-1zM51 36h1v1h-1zM1 37h2v1h-2zM5 37h1v1h-1zM8 37h4v1h-4zM17 37h1v1h-1zM21 37h2v1h-2zM24 37h1v1h-1zM26 37h2v1h-2zM29 37h2v1h-2zM38 37h1v1h-1zM40 37h1v1h-1zM42 37h1v1h-1zM46 37h1v1h-1zM48 37h1v1h-1zM50 37h2v1h-2zM0 38h1v1h-1zM4 38h2v1h-2zM7 38h8v1h-8zM20 38h1v1h-1zM22 38h1v1h-1zM25 38h4v1h-4zM30 38h1v1h-1zM32 38h2v1h-2zM35 38h1v1h-1zM37 38h2v1h-2zM40 38h1v1h-1zM42 38h2v1h-2zM45 38h4v1h-4zM50 38h2v1h-2zM1 39h3v1h-3zM12 39h1v1h-1zM16 39h1v1h-1zM18 39h1v1h-1zM21 39h1v1h-1zM24 39h1v1h-1zM28 39h3v1h-3zM32 39h2v1h-2zM35 39h2v1h-2zM39 39h5v1h-5zM46 39h1v1h-1zM48 39h1v1h-1zM52 39h1v1h-1zM0 40h1v1h-1zM2 40h2v1h-2zM5 40h1v1h-1zM13 40h2v1h-2zM16 40h1v1h-1zM20 40h3v1h-3zM27 40h2v1h-2zM31 40h1v1h-1zM34 40h2v1h-2zM39 40h1v1h-1zM45 40h3v1h-3zM50 40h2v1h-2zM1 41h1v1h-1zM4 41h2v1h-2zM7 41h1v1h-1zM9 41h2v1h-2zM14 41h2v1h-2zM17 41h1v1h-1zM22 41h3v1h-3zM26 41h3v1h-3zM33 41h2v1h-2zM36 41h1v1h-1zM38 41h4v1h-4zM44 41h4v1h-4zM51 41h1v1h-1zM0 42h2v1h-2zM4 42h1v1h-1zM7 42h1v1h-1zM10 42h1v1h-1zM12 42h2v1h-2zM15 42h2v1h-2zM18 42h1v1h-1zM20 42h4v1h-4zM25 42h1v1h-1zM27 42h1v1h-1zM29 42h4v1h-4zM34 42h6v1h-6zM41 42h2v1h-2zM44 42h2v1h-2zM47 42h2v1h-2zM51 42h2v1h-2zM1 43h1v1h-1zM3 43h1v1h-1zM6 43h3v1h-3zM10 43h1v1h-1zM13 43h2v1h-2zM16 43h1v1h-1zM18 43h1v1h-1zM21 43h1v1h-1zM23 43h1v1h-1zM26 43h4v1h-4zM31 43h1v1h-1zM33 43h1v1h-1zM35 43h1v1h-1zM37 43h5v1h-5zM43 43h2v1h-2zM49 43h3v1h-3zM1 44h2v1h-2zM5 44h1v1h-1zM7 44h1v1h-1zM9 44h2v1h-2zM14 44h8v1h-8zM23 44h6v1h-6zM30 44h2v1h-2zM34 44h2v1h-2zM38 44h3v1h-3zM42 44h1v1h-1zM44 44h5v1h-5zM50 44h2v1h-2zM9 45h1v1h-1zM12 45h1v1h-1zM14 45h1v1h-1zM17 45h1v1h-1zM22 45h3v1h-3zM28 45h1v1h-1zM31 45h2v1h-2zM34 45h1v1h-1zM36 45h2v1h-2zM39 45h1v1h-1zM41 45h1v1h-1zM44 45h1v1h-1zM48 45h1v1h-1zM51 45h2v1h-2zM0 46h7v1h-7zM8 46h6v1h-6zM16 46h1v1h-1zM20 46h5v1h-5zM26 46h1v1h-1zM28 46h1v1h-1zM31 46h4v1h-4zM37 46h2v1h-2zM42 46h1v1h-1zM44 46h1v1h-1zM46 46h1v1h-1zM48 46h3v1h-3zM52 46h1v1h-1zM0 47h1v1h-1zM6 47h1v1h-1zM9 47h4v1h-4zM14 47h1v1h-1zM16 47h2v1h-2zM19 47h4v1h-4zM24 47h1v1h-1zM28 47h2v1h-2zM32 47h3v1h-3zM38 47h3v1h-3zM42 47h3v1h-3zM48 47h1v1h-1zM0 48h1v1h-1zM2 48h3v1h-3zM6 48h1v1h-1zM9 48h2v1h-2zM12 48h2v1h-2zM15 48h2v1h-2zM18 48h1v1h-1zM20 48h1v1h-1zM23 48h6v1h-6zM30 48h2v1h-2zM33 48h2v1h-2zM36 48h1v1h-1zM38 48h1v1h-1zM41 48h9v1h-9zM52 48h1v1h-1zM0 49h1v1h-1zM2 49h3v1h-3zM6 49h1v1h-1zM8 49h4v1h-4zM13 49h2v1h-2zM16 49h1v1h-1zM23 49h1v1h-1zM25 49h1v1h-1zM29 49h2v1h-2zM34 49h1v1h-1zM36 49h1v1h-1zM39 49h1v1h-1zM42 49h3v1h-3zM47 49h3v1h-3zM51 49h1v1h-1zM0 50h1v1h-1zM2 50h3v1h-3zM6 50h1v1h-1zM9 50h3v1h-3zM15 50h2v1h-2zM19 50h3v1h-3zM23 50h1v1h-1zM26 50h3v1h-3zM31 50h4v1h-4zM36 50h3v1h-3zM40 50h3v1h-3zM44 50h2v1h-2zM47 50h2v1h-2zM50 50h1v1h-1zM0 51h1v1h-1zM6 51h1v1h-1zM9 51h2v1h-2zM15 51h1v1h-1zM20 51h1v1h-1zM22 51h4v1h-4zM27 51h7v1h-7zM35 51h2v1h-2zM38 51h5v1h-5zM46 51h1v1h-1zM49 51h2v1h-2zM0 52h7v1h-7zM8 52h4v1h-4zM13 52h3v1h-3zM19 52h1v1h-1zM23 52h1v1h-1zM26 52h3v1h-3zM33 52h2v1h-2zM37 52h1v1h-1zM39 52h4v1h-4zM44 52h2v1h-2zM47 52h3v1h-3z" fill="#000"/></svg>
</body></html>
